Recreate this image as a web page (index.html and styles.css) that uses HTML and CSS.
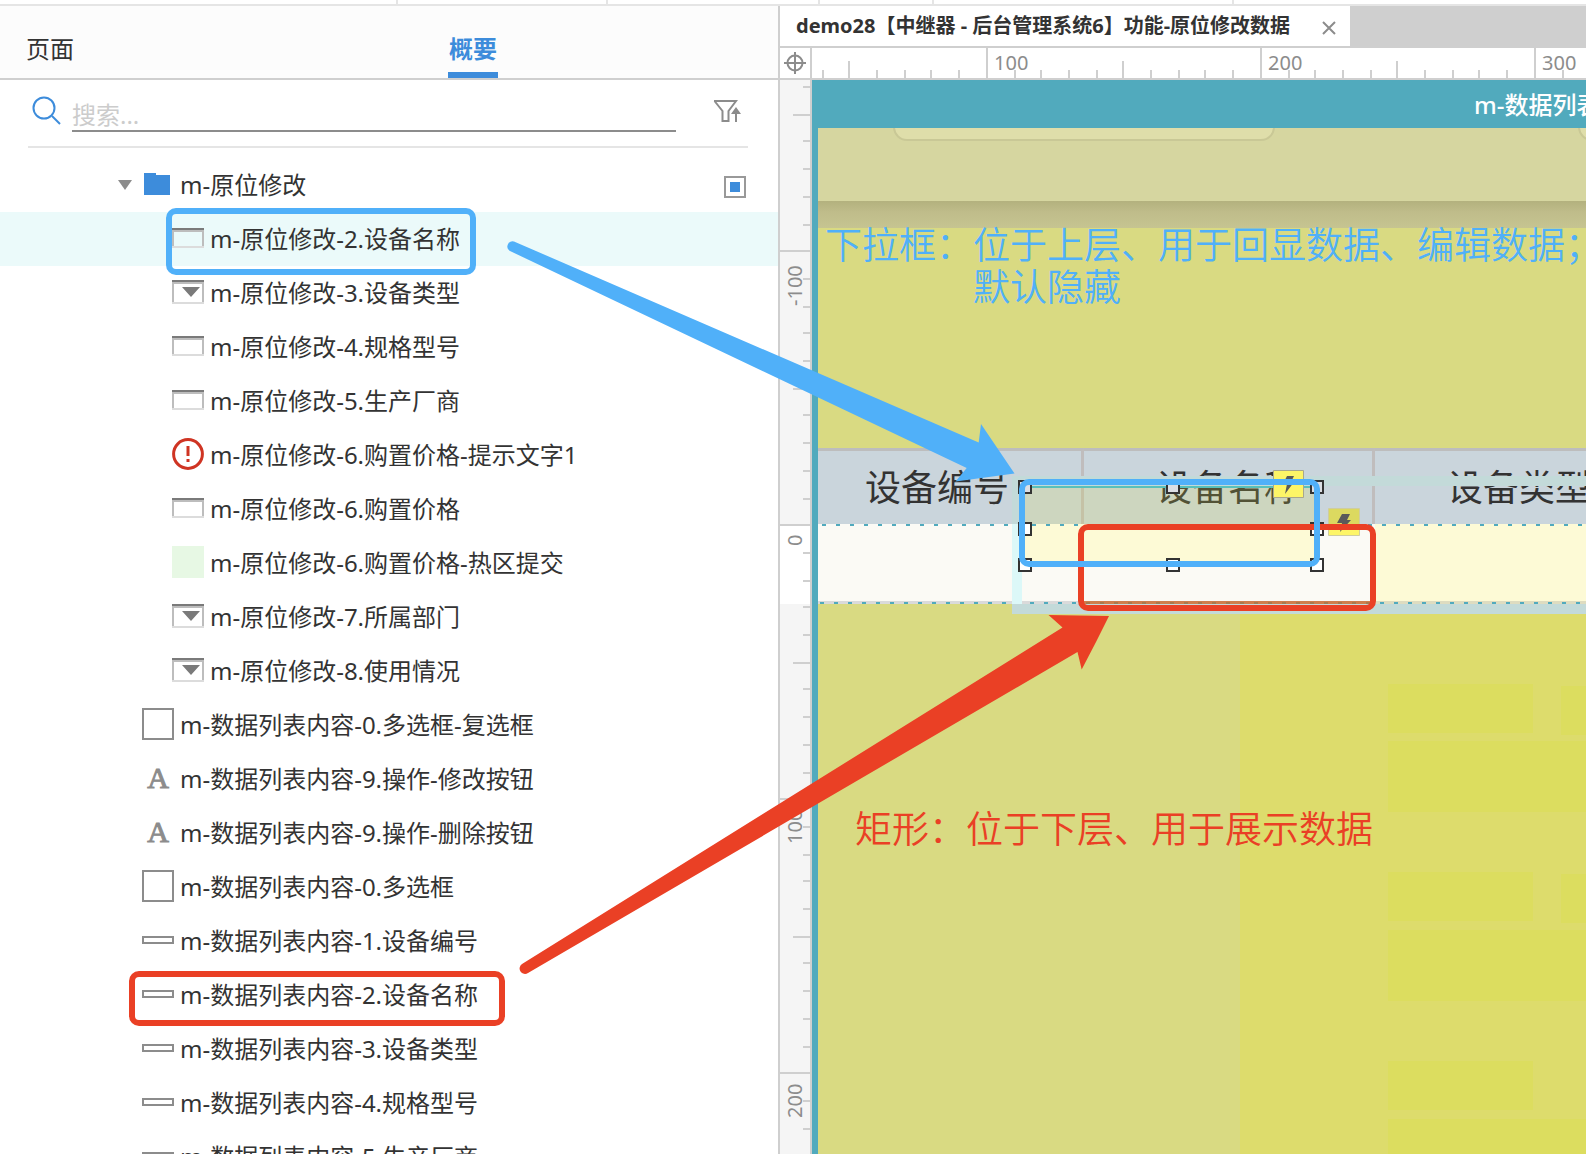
FILE: index.html
```html
<!DOCTYPE html>
<html lang="zh-CN">
<head>
<meta charset="utf-8">
<title>demo28</title>
<link rel="stylesheet" href="styles.css">
</head>
<body>
<svg class="defs" aria-hidden="true">
  <symbol id="i-field" viewBox="0 0 32 20"><path fill="#bdbdbd" d="M0 2h32v18H0zM2 4v14h28V4z" fill-rule="evenodd"/><path fill="#dcdcdc" d="M0 18h32v2H0z"/><path fill="#7a7a7a" d="M0 0h32v2H0z"/></symbol>
  <symbol id="i-drop" viewBox="0 0 32 24"><path fill="#bdbdbd" d="M0 2h32v22H0zM2 4v18h28V4z" fill-rule="evenodd"/><path fill="#dcdcdc" d="M0 22h32v2H0z"/><path fill="#7a7a7a" d="M0 0h32v2H0zM10 7h18l-9 10z"/></symbol>
  <symbol id="i-warn" viewBox="0 0 32 32"><circle cx="16" cy="16" r="14.4" fill="none" stroke="#cf3423" stroke-width="3"/><path fill="#cf3423" d="M14.500 8h3v10h-3zM14.500 21h3v3h-3z"/></symbol>
  <symbol id="i-hot" viewBox="0 0 32 32"><path fill="#e7f8e4" d="M0 0h32v32H0z"/></symbol>
  <symbol id="i-box" viewBox="0 0 32 32"><path fill="#fff" stroke="#8c8c8c" stroke-width="2" d="M1 1h30v30H1z"/></symbol>
  <symbol id="i-bar" viewBox="0 0 32 8"><path fill="#fff" stroke="#8c8c8c" stroke-width="2" d="M1 1h30v6H1z"/></symbol>
  <symbol id="i-folder" viewBox="0 0 32 22"><path fill="#3d8cdb" d="M2 0h12v2h14v20H2z"/></symbol>
</svg>

<div class="app">
  <div class="topbar"><i></i><i></i><i></i><i></i><i></i></div>
  <div class="main">
    <aside class="panel">
      <nav class="tabs">
        <button class="tab" type="button">页面</button>
        <button class="tab active" type="button">概要</button>
      </nav>
      <div class="search">
        <svg class="search-icon" viewBox="0 0 30 30"><g fill="none" stroke="#3d8cdb" stroke-width="2"><circle cx="12" cy="12" r="10.500"/><path d="M20 20l8 8"/></g></svg>
        <input class="search-input" type="text" placeholder="搜索..." aria-label="搜索">
        <button class="filter" type="button" aria-label="筛选">
          <svg viewBox="0 0 28 24"><path fill="none" stroke="#8c8c8c" stroke-width="2" d="M1 2h22l-7.500 10v10h-6V12L1.500 2"/><path fill="#8c8c8c" d="M23 8l5 7h-4v8h-2v-8h-4z"/></svg>
        </button>
      </div>
      <ul class="tree">
        <li class="row"><span class="caret"></span><svg class="icon h22"><use href="#i-folder"/></svg><span>m-原位修改</span><input class="check" type="checkbox" aria-label="m-原位修改"></li>
        <li class="row child selected"><svg class="icon h20"><use href="#i-field"/></svg><span>m-原位修改-2.设备名称</span></li>
        <li class="row child"><svg class="icon h24"><use href="#i-drop"/></svg><span>m-原位修改-3.设备类型</span></li>
        <li class="row child"><svg class="icon h20"><use href="#i-field"/></svg><span>m-原位修改-4.规格型号</span></li>
        <li class="row child"><svg class="icon h20"><use href="#i-field"/></svg><span>m-原位修改-5.生产厂商</span></li>
        <li class="row child"><svg class="icon h32"><use href="#i-warn"/></svg><span>m-原位修改-6.购置价格-提示文字1</span></li>
        <li class="row child"><svg class="icon h20"><use href="#i-field"/></svg><span>m-原位修改-6.购置价格</span></li>
        <li class="row child"><svg class="icon h32"><use href="#i-hot"/></svg><span>m-原位修改-6.购置价格-热区提交</span></li>
        <li class="row child"><svg class="icon h24"><use href="#i-drop"/></svg><span>m-原位修改-7.所属部门</span></li>
        <li class="row child"><svg class="icon h24"><use href="#i-drop"/></svg><span>m-原位修改-8.使用情况</span></li>
        <li class="row"><svg class="icon h32"><use href="#i-box"/></svg><span>m-数据列表内容-0.多选框-复选框</span></li>
        <li class="row"><span class="icon letter">A</span><span>m-数据列表内容-9.操作-修改按钮</span></li>
        <li class="row"><span class="icon letter">A</span><span>m-数据列表内容-9.操作-删除按钮</span></li>
        <li class="row"><svg class="icon h32"><use href="#i-box"/></svg><span>m-数据列表内容-0.多选框</span></li>
        <li class="row"><svg class="icon h8"><use href="#i-bar"/></svg><span>m-数据列表内容-1.设备编号</span></li>
        <li class="row"><svg class="icon h8"><use href="#i-bar"/></svg><span>m-数据列表内容-2.设备名称</span></li>
        <li class="row"><svg class="icon h8"><use href="#i-bar"/></svg><span>m-数据列表内容-3.设备类型</span></li>
        <li class="row"><svg class="icon h8"><use href="#i-bar"/></svg><span>m-数据列表内容-4.规格型号</span></li>
        <li class="row"><svg class="icon h8"><use href="#i-bar"/></svg><span>m-数据列表内容-5.生产厂商</span></li>
      </ul>
    </aside>

    <section class="editor">
      <div class="doc-tabs">
        <div class="doc-tab">
          <span>demo28【中继器 - 后台管理系统6】功能-原位修改数据</span>
          <button class="close" type="button" aria-label="关闭"><svg viewBox="0 0 14 14"><path stroke="#8c8c8c" stroke-width="2" d="M1 1l12 12M13 1L1 13"/></svg></button>
        </div>
      </div>
      <div class="ruler-row">
        <div class="origin"><svg viewBox="0 0 22 22"><g fill="none" stroke="#8c8c8c" stroke-width="2"><circle cx="11" cy="11" r="7.500"/><path d="M11 0v22M0 11h22"/></g></svg></div>
        <svg class="ruler-x">
          <path d="M11 22v8M65 22v8M93 22v8M119 22v8M147 22v8M203 22v8M229 22v8M257 22v8M285 22v8M339 22v8M367 22v8M393 22v8M421 22v8M477 22v8M503 22v8M531 22v8M559 22v8M613 22v8M641 22v8M667 22v8M695 22v8M751 22v8M37 13v17M311 13v17M585 13v17M175 0v30M449 0v30M723 0v30"/>
          <text x="182" y="22">100</text><text x="456" y="22">200</text><text x="730" y="22">300</text>
        </svg>
      </div>
      <div class="stage">
        <svg class="ruler-y">
          <rect y="446" width="30" height="78" fill="#fff"/>
          <path d="M23 7h7M23 61h7M23 89h7M23 117h7M23 145h7M23 199h7M23 227h7M23 253h7M23 281h7M23 335h7M23 363h7M23 391h7M23 419h7M23 473h7M23 501h7M23 527h7M23 555h7M23 609h7M23 637h7M23 665h7M23 693h7M23 747h7M23 775h7M23 801h7M23 829h7M23 883h7M23 911h7M23 939h7M23 967h7M23 1021h7M23 1049h7M13 35h17M13 309h17M13 583h17M13 857h17M0 171h30M0 445h30M0 719h30M0 993h30"/>
          <text transform="translate(22 226) rotate(-90)">-100</text>
          <text transform="translate(22 466) rotate(-90)">0</text>
          <text transform="translate(22 764) rotate(-90)">100</text>
          <text transform="translate(22 1038) rotate(-90)">200</text>
        </svg>
        <div class="frame">
          <h1 class="frame-title">m-数据列表</h1>
          <div class="canvas">
            <div class="strip"><i class="pill one"></i><i class="pill two"></i></div>
            <div class="shade"></div>
            <div class="pane">
              <i class="blk s" style="top:70px"></i><i class="blk s next" style="top:72px"></i><i class="blk l" style="top:127px"></i>
              <i class="blk s" style="top:258px"></i><i class="blk s next" style="top:260px"></i><i class="blk l" style="top:316px"></i>
              <i class="blk s" style="top:447px"></i><i class="blk l" style="top:505px"></i>
            </div>
            <table class="grid">
              <thead><tr><th>设备编号</th><th>设备名称</th><th>设备类型</th></tr></thead>
              <tbody><tr><td></td><td></td><td></td></tr></tbody>
            </table>
            <i class="field-body"></i>
            <i class="dash top"></i><i class="dash bottom"></i>
            <i class="edge left-low"></i><i class="edge left-high"></i><i class="edge top"></i><i class="edge bottom"></i>
            <i class="field-head"></i>
          </div>
        </div>
      </div>
    </section>
  </div>

  <svg class="marks" aria-hidden="true">
    <path fill="#cf7f4d" d="M1080 601h293v3h-293z"/>
    <path stroke="#a97a4d" stroke-width="2" stroke-dasharray="4 10" d="M1086 603h284"/>
    <g stroke-width="1">
      <path fill="#fdf567" stroke="#a9a78c" d="M1273.500 470.500h30v27h-30z"/>
      <path fill="#fdf567" stroke="#cfcda0" d="M1328.500 508.500h31v27h-31z"/>
      <path fill="#dcd960" d="M1329 509h30v15h-30z"/>
    </g>
    <path fill="#5a5a5a" d="M1287 476h7l-3 6h3l-9 12 2-10h-4zM1342 514h8l-3 6h4l-11 12 2-9h-5z"/>
    <g fill="#fff" stroke="#333" stroke-width="2">
      <path fill="#dcdfe4" d="M1019 481h12v12h-12zM1167 481h12v12h-12zM1311 481h12v12h-12z"/>
      <path d="M1019 523h12v12h-12zM1019 559h12v12h-12zM1167 559h12v12h-12zM1311 523h12v12h-12zM1311 559h12v12h-12z"/>
    </g>
    <g fill="none" stroke-width="6">
      <rect x="1081" y="527" width="292" height="81" rx="7" stroke="#ea4025"/>
      <rect x="1022" y="482" width="295" height="82" rx="7" stroke="#50b0f9"/>
      <rect x="169" y="211" width="304" height="61" rx="7" stroke="#50b0f9"/>
      <rect x="132" y="974" width="370" height="49" rx="7" stroke="#ea4025"/>
    </g>
    <path fill="#50b0f9" d="M514 241.500L978.700 442.500 981 424 1014.500 473.500 955.500 481.500 966.700 468 510 251A5.200 5.200 0 0 1 514 241.500z"/>
    <path fill="#ea4025" d="M522 964L1062.500 627.500 1048.500 615 1109 616 1096 642 1081.700 669.500 1077.500 652 528 973A5.200 5.200 0 0 1 522 964z"/>
  </svg>
  <p class="note blue">下拉框：位于上层、用于回显数据、编辑数据；<br><span>默认隐藏</span></p>
  <p class="note red">矩形：位于下层、用于展示数据</p>
</div>
</body>
</html>
```
FILE: styles.css
```css
* { box-sizing: border-box; }
body {
  margin: 0;
  overflow: hidden;
  background: #fff;
  color: #333;
  font: 24px/36px "Noto Sans", "Noto Sans CJK SC", sans-serif;
}
button { border: 0; padding: 0; margin: 0; background: none; font: inherit; color: inherit; }
svg { display: block; }
.defs { position: absolute; width: 0; height: 0; }

.app { position: relative; display: flex; flex-direction: column; height: 100vh; overflow: hidden; }
.topbar { display: flex; flex: none; height: 6px; border-bottom: 2px solid #e5e5e5; }
.topbar i { border-right: 2px solid #e5e5e5; width: 210px; }
.topbar i:nth-child(1) { width: 398px; }
.topbar i:nth-child(3) { width: 212px; }
.topbar i:nth-child(4) { width: 114px; }
.topbar i:nth-child(5) { width: 300px; }
.main { display: flex; flex: 1; min-height: 0; }

/* outline panel */
.panel { flex: 0 0 780px; border-right: 2px solid #cfcfcf; overflow: hidden; }
.tabs { display: flex; height: 74px; padding-left: 25px; gap: 373px; background: #fcfcfc; border-bottom: 2px solid #cfcfcf; }
.tab { width: 50px; padding-top: 20px; border-bottom: 6px solid transparent; line-height: 46px; }
.tab.active { color: #3d8cdb; font-weight: 700; border-color: #3d8cdb; }
.search { display: flex; align-items: flex-start; height: 68px; margin: 0 30px 0 28px; padding: 16px 4px 0; border-bottom: 2px solid #e5e5e5; }
.search-icon { width: 30px; height: 30px; margin-right: 10px; }
.search-input { flex: 1; min-width: 0; height: 36px; padding: 2px 0 0; border: 0; border-bottom: 2px solid #8c8c8c; background: none; font: inherit; line-height: 30px; color: #333; outline: 0; }
.search-input::placeholder { color: #ccc; }
.filter { margin: 3px 3px 0 37px; }
.filter svg { width: 28px; height: 24px; }

.tree { list-style: none; margin: 0; padding: 10px 0 0; }
.row { display: flex; align-items: center; gap: 6px; height: 54px; padding: 0 32px 0 142px; white-space: nowrap; }
.row.child { padding-left: 172px; }
.row.selected { background: #ebfafa; }
.caret { width: 14px; height: 10px; margin: 0 4px 0 -24px; background: #8c8c8c; clip-path: polygon(0 0, 100% 0, 50% 100%); }
.icon { flex: none; width: 32px; margin-bottom: 2px; }
.h8 { height: 8px; }
.h20 { height: 20px; }
.h22 { height: 22px; }
.h24 { height: 24px; }
.h32 { height: 32px; }
.letter { font: 400 30px/36px "Liberation Serif", serif; color: #8c8c8c; -webkit-text-stroke: 1px #8c8c8c; text-align: center; }
.check { appearance: none; width: 22px; height: 22px; margin: 4px 0 0 auto; border: 2px solid #999; background: linear-gradient(#3d8cdb, #3d8cdb) center / 10px 10px no-repeat; }

/* editor */
.editor { display: flex; flex: 1; flex-direction: column; min-width: 0; }
.doc-tabs { display: flex; height: 42px; background: #cfcfcf; border-bottom: 2px solid #cfcfcf; }
.doc-tab { display: flex; align-items: center; justify-content: space-between; width: 570px; padding: 0 14px 0 16px; background: #fff; font-size: 20px; font-weight: 700; white-space: nowrap; }
.close { margin-top: 4px; }
.close svg { width: 14px; height: 14px; }
.ruler-row { display: flex; height: 32px; border-bottom: 2px solid #cfcfcf; }
.origin { flex: none; width: 32px; padding: 4px; border-right: 2px solid #cfcfcf; }
.origin svg { width: 22px; height: 22px; }
.ruler-x { flex: 1; min-width: 0; height: 30px; }
.ruler-x path, .ruler-y path { stroke: #cfcfcf; stroke-width: 2; }
.ruler-x text, .ruler-y text { font-size: 20px; fill: #8c8c8c; }
.stage { display: flex; flex: 1; min-height: 0; }
.ruler-y { flex: none; width: 32px; height: 100%; background: #f5f5f5; border-right: 2px solid #cfcfcf; }
.frame { display: flex; flex: 1; flex-direction: column; min-width: 0; padding-left: 6px; background: #51aabd; overflow: hidden; }
.frame-title { height: 48px; margin: 0; padding-left: 656px; color: #fff; font-size: 24px; font-weight: 500; line-height: 50px; white-space: nowrap; }
.canvas { position: relative; flex: 1; background: #d9da82; overflow: hidden; }
.canvas i { position: absolute; }
.strip { position: relative; height: 73px; background: #d6d6a0; overflow: hidden; }
.pill { top: -40px; width: 382px; height: 53px; border: 2px solid #c9c896; border-radius: 14px; background: #dfdeaa; }
.pill.one { left: 75px; }
.pill.two { left: 760px; }
.shade { height: 27px; background: linear-gradient(#b3b17e, #bfbc8a 40%, #c6c491); }
.pane { position: absolute; left: 422px; right: 0; top: 486px; bottom: 0; background: #dddc6c; overflow: hidden; }
.canvas .blk { left: 148px; background: #dcdd5f; }
.blk.s { width: 145px; height: 49px; }
.canvas .blk.next { left: 321px; }
.blk.l { width: 400px; height: 71px; }

.grid { position: absolute; left: -25px; top: 320px; width: 873px; table-layout: fixed; border-spacing: 0; }
.grid th { height: 76px; padding: 0; border-top: 3px solid #bdbdbd; border-right: 3px solid #c0bdbd; background: #cad5dc; font-size: 36px; font-weight: 400; line-height: 48px; }
.grid td { height: 80px; padding: 0; border-bottom: 3px solid #dadada; background: #fbfaf5; }
.grid td:last-child { background: #fdfad6; border-color: #dedcc0; }
.dash { left: 0; right: 0; height: 2px; background: repeating-linear-gradient(90deg, #51aabd 0 4px, transparent 4px 14px) 4px 0; }
.dash.top { top: 396px; }
.dash.bottom { top: 474px; background-position-x: 2px; }
.edge { left: 194px; background: #c3dad9; }
.edge.top { top: 348px; right: 0; height: 10px; }
.edge.bottom { top: 476px; right: 0; height: 10px; }
.edge.left-high { top: 348px; width: 10px; height: 48px; }
.edge.left-low { top: 396px; width: 10px; height: 80px; background: #dcf8f8; }
.field-head { left: 206px; top: 358px; width: 293px; height: 38px; border-top: 2px solid #58c0bb; background: rgba(218, 218, 67, 0.19); }
.field-body { left: 206px; top: 396px; width: 293px; height: 42px; background: #fdfad6; }

/* annotations drawn over the window */
.marks { position: absolute; inset: 0; width: 100%; height: 100%; pointer-events: none; }
.note { position: absolute; margin: 0; font: 350 37px/42px "Noto Sans CJK SC", sans-serif; white-space: nowrap; }
.note.blue { left: 825px; top: 222px; color: #50b0f9; }
.note.blue span { padding-left: 4em; }
.note.red { left: 855px; top: 806px; color: #ea4025; }
```
